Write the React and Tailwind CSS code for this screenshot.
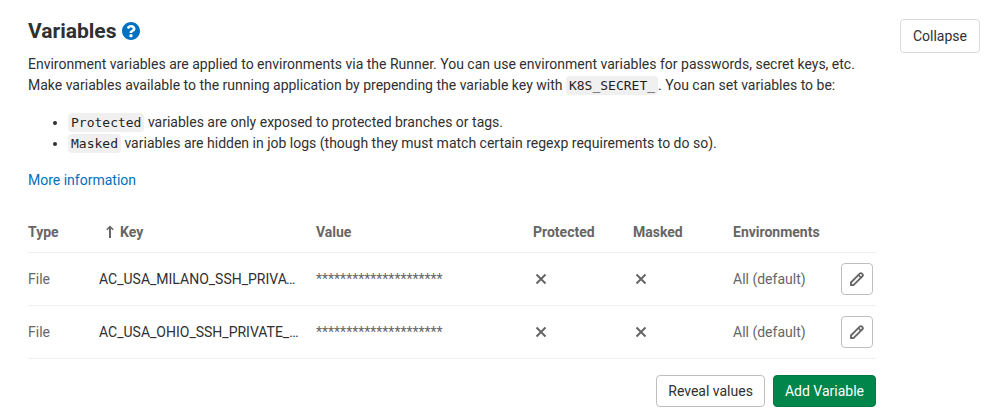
import React from "react";

const variables = [
  { key: "AC_USA_MILANO_SSH_PRIVATE_KEY", type: "File", environments: "All (default)" },
  { key: "AC_USA_OHIO_SSH_PRIVATE_KEY", type: "File", environments: "All (default)" },
];

function Code({ children }) {
  return (
    <code className="rounded bg-[#f0f0f0] px-[3px] py-0.5 font-['DejaVu_Sans_Mono',monospace] text-[13px] leading-4 text-[#1f1f1f]">
      {children}
    </code>
  );
}

function HelpIcon() {
  return (
    <svg viewBox="8 8 496 496" className="size-[18px]" fill="currentColor" aria-hidden="true">
      <path d="M504 256c0 136.997-111.043 248-248 248S8 392.997 8 256C8 119.083 119.043 8 256 8s248 111.083 248 248zM262.655 90c-54.497 0-89.255 22.957-116.549 63.758-3.536 5.286-2.353 12.415 2.715 16.258l34.699 26.31c5.205 3.947 12.621 3.008 16.665-2.122 17.864-22.658 30.113-35.797 57.303-35.797 20.429 0 45.698 13.148 45.698 32.958 0 14.976-12.363 22.667-32.534 33.976C247.128 238.528 216 254.941 216 296v4c0 6.627 5.373 12 12 12h56c6.627 0 12-5.373 12-12v-1.333c0-28.462 83.186-29.647 83.186-106.667 0-58.002-60.165-102-116.531-102zM256 338c-25.365 0-46 20.635-46 46 0 25.364 20.635 46 46 46s46-20.636 46-46c0-25.364-20.635-46-46-46z" />
    </svg>
  );
}

function CrossIcon({ label }) {
  return (
    <svg viewBox="0 0 16 16" className="size-4" fill="none" stroke="currentColor" strokeWidth="2" role="img" aria-label={label}>
      <path d="M3.5 3.5l9 9M12.5 3.5l-9 9" />
    </svg>
  );
}

function PencilIcon() {
  return (
    <svg viewBox="0 0 16 16" className="size-4" fill="none" stroke="currentColor" aria-hidden="true">
      <path d="M1.9 14.1v-2.6l9.1-9.1a1.2 1.2 0 0 1 1.7 0l.9.9a1.2 1.2 0 0 1 0 1.7l-9.1 9.1z" strokeWidth="1.8" strokeLinejoin="round" />
      <path d="M9.4 4l2.6 2.6" strokeWidth="1.6" />
      <path d="M1.4 11.4l3.2 3.2H1.4z" fill="currentColor" stroke="none" />
    </svg>
  );
}

export default function App() {
  return (
    <section className="flex items-start gap-6 bg-white pt-[19px] pr-[21px] pl-7 font-[Roboto,sans-serif] text-sm leading-[21px] text-[#303030]">
      <div className="min-w-0 flex-1">
        <h4 className="flex items-center gap-1.5 text-[21px] leading-6 font-bold">
          Variables
          <a href="#help" aria-label="Variables help" className="text-[#0070c0]">
            <HelpIcon />
          </a>
        </h4>
        <p className="mt-[11px]">
          Environment variables are applied to environments via the Runner. You can use environment variables for
          passwords, secret keys, etc. Make variables available to the running application by prepending the variable
          key with <Code>K8S_SECRET_</Code>. You can set variables to be:
        </p>
        <ul className="mt-4 list-disc pl-10">
          <li>
            <Code>Protected</Code> variables are only exposed to protected branches or tags.
          </li>
          <li>
            <Code>Masked</Code> variables are hidden in job logs (though they must match certain regexp requirements to
            do so).
          </li>
        </ul>
        <p className="mt-4">
          <a href="#more" className="text-[#0070c0]">
            More information
          </a>
        </p>

        <table className="mt-5 w-full table-fixed border-collapse text-left text-[#666]">
          <colgroup>
            <col className="w-[71px]" />
            <col className="w-[217px]" />
            <col className="w-[217px]" />
            <col className="w-[100px]" />
            <col className="w-[100px]" />
            <col />
            <col className="w-[35px]" />
          </colgroup>
          <thead>
            <tr className="h-[41px] border-b border-[#f0f0f0] *:pt-0.5">
              <th scope="col">Type</th>
              <th scope="col">
                <span className="flex items-center gap-0.5 pl-[3px]">
                  <svg viewBox="0 0 16 16" className="size-4" fill="none" stroke="currentColor" aria-hidden="true">
                    <path d="M8 14V3" strokeWidth="2" />
                    <path d="M4.8 5.8L8 2.6l3.2 3.2" strokeWidth="1.5" />
                  </svg>
                  Key
                </span>
              </th>
              <th scope="col">Value</th>
              <th scope="col">Protected</th>
              <th scope="col">Masked</th>
              <th scope="col">Environments</th>
              <th scope="col" aria-label="Actions" />
            </tr>
          </thead>
          <tbody>
            {variables.map((v) => (
              <tr key={v.key} className="h-[53px] border-b border-[#f0f0f0]">
                <td className="pt-0.5">{v.type}</td>
                <td className="truncate pt-0.5 pr-4 text-[#303030]">{v.key}</td>
                <td className="pt-0.5">*********************</td>
                <td>
                  <CrossIcon label="Not protected" />
                </td>
                <td>
                  <CrossIcon label="Not masked" />
                </td>
                <td className="pt-0.5">{v.environments}</td>
                <td>
                  <button
                    type="button"
                    aria-label="Edit"
                    className="flex size-8 items-center justify-center rounded border border-[#bfbfbf] bg-white"
                  >
                    <PencilIcon />
                  </button>
                </td>
              </tr>
            ))}
          </tbody>
        </table>

        <div className="mt-4 flex justify-end gap-2">
          <button type="button" className="h-8 rounded border border-[#bfbfbf] bg-white px-[11px] pt-px">
            Reveal values
          </button>
          <button type="button" className="h-8 rounded border border-[#007a42] bg-[#00854a] px-[11px] pt-px text-white">
            Add Variable
          </button>
        </div>
      </div>
      <button type="button" className="h-[34px] shrink-0 rounded border border-[#dbdbdb] bg-white px-3">
        Collapse
      </button>
    </section>
  );
}
